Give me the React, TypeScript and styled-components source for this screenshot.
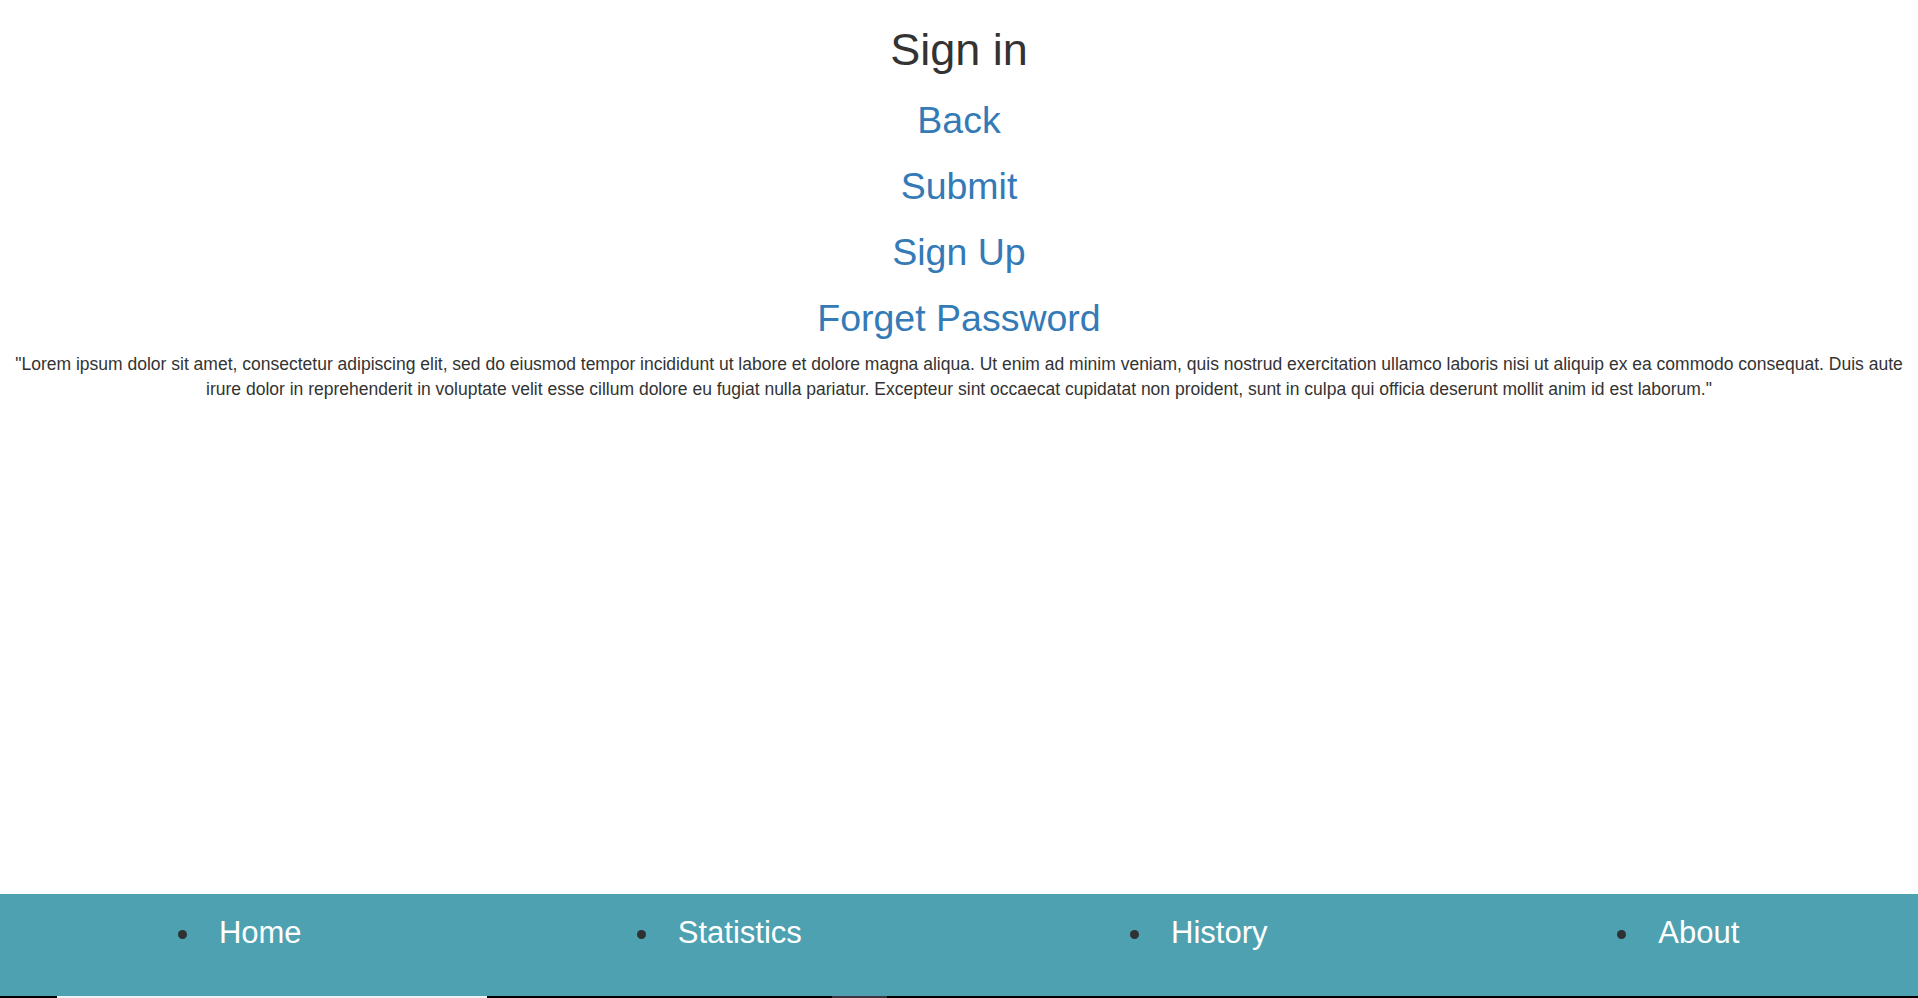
import React from "react";
import styled, { createGlobalStyle } from "styled-components";

const GlobalStyle = createGlobalStyle`
  html, body {
    margin: 0;
    padding: 0;
    background: #ffffff;
  }
  body {
    font-family: "Liberation Sans", Arial, sans-serif;
    color: #333333;
  }
  * { box-sizing: border-box; }
`;

const Page = styled.div`
  display: flex;
  flex-direction: column;
  min-height: 100vh;
`;

const Main = styled.main`
  flex: 1;
  padding: 0 15px;
  text-align: center;
`;

const Title = styled.h1`
  margin: 25px 0 12.5px;
  font-size: 45px;
  font-weight: 400;
  line-height: 1.1;
  color: #333333;
`;

const LinkHeading = styled.h2`
  margin: 25px 0 12.5px;
  font-size: 37.5px;
  font-weight: 400;
  line-height: 1.1;
`;

const NavLink = styled.a`
  color: #337ab7;
  text-decoration: none;
`;

const Paragraph = styled.p`
  margin: 0;
  font-size: 17.5px;
  line-height: 25px;
  color: #333333;
`;

const Footer = styled.footer`
  height: 102px;
  background: #4da1b1;
`;

const NavList = styled.ul`
  display: flex;
  margin: 0;
  padding: 19px 0 0;
  list-style: none;
`;

const NavItem = styled.li`
  flex: 1;
  display: flex;
  align-items: center;
  justify-content: center;
  gap: 32px;
  height: 40px;
`;

const Dot = styled.span`
  width: 9px;
  height: 9px;
  border-radius: 50%;
  background: #2f3133;
  margin-top: 2px;
`;

const NavText = styled.a`
  color: #ffffff;
  font-size: 31px;
  line-height: 40px;
  text-decoration: none;
`;

const BottomStrip = styled.div`
  display: flex;
  height: 2px;
  background: #000000;
`;

const StripSegment = styled.span<{ $w: number; $c: string }>`
  flex: 0 0 ${(p) => p.$w}px;
  background: ${(p) => p.$c};
`;

const links = ["Back", "Submit", "Sign Up", "Forget Password"];
const navItems = ["Home", "Statistics", "History", "About"];

export default function App() {
  return (
    <>
      <GlobalStyle />
      <Page>
        <Main>
          <Title>Sign in</Title>
          {links.map((l) => (
            <LinkHeading key={l}>
              <NavLink href="#">{l}</NavLink>
            </LinkHeading>
          ))}
          <Paragraph>
            "Lorem ipsum dolor sit amet, consectetur adipiscing elit, sed do eiusmod tempor incididunt ut labore et dolore magna aliqua. Ut enim ad minim veniam, quis nostrud exercitation ullamco laboris nisi ut aliquip ex ea commodo consequat. Duis aute irure dolor in reprehenderit in voluptate velit esse cillum dolore eu fugiat nulla pariatur. Excepteur sint occaecat cupidatat non proident, sunt in culpa qui officia deserunt mollit anim id est laborum."
          </Paragraph>
        </Main>
        <Footer>
          <NavList>
            {navItems.map((n) => (
              <NavItem key={n}>
                <Dot />
                <NavText href="#">{n}</NavText>
              </NavItem>
            ))}
          </NavList>
        </Footer>
        <BottomStrip>
          <StripSegment $w={57} $c="#000000" />
          <StripSegment $w={430} $c="#f0eef5" />
          <StripSegment $w={345} $c="#000000" />
          <StripSegment $w={55} $c="#3a3540" />
        </BottomStrip>
      </Page>
    </>
  );
}
